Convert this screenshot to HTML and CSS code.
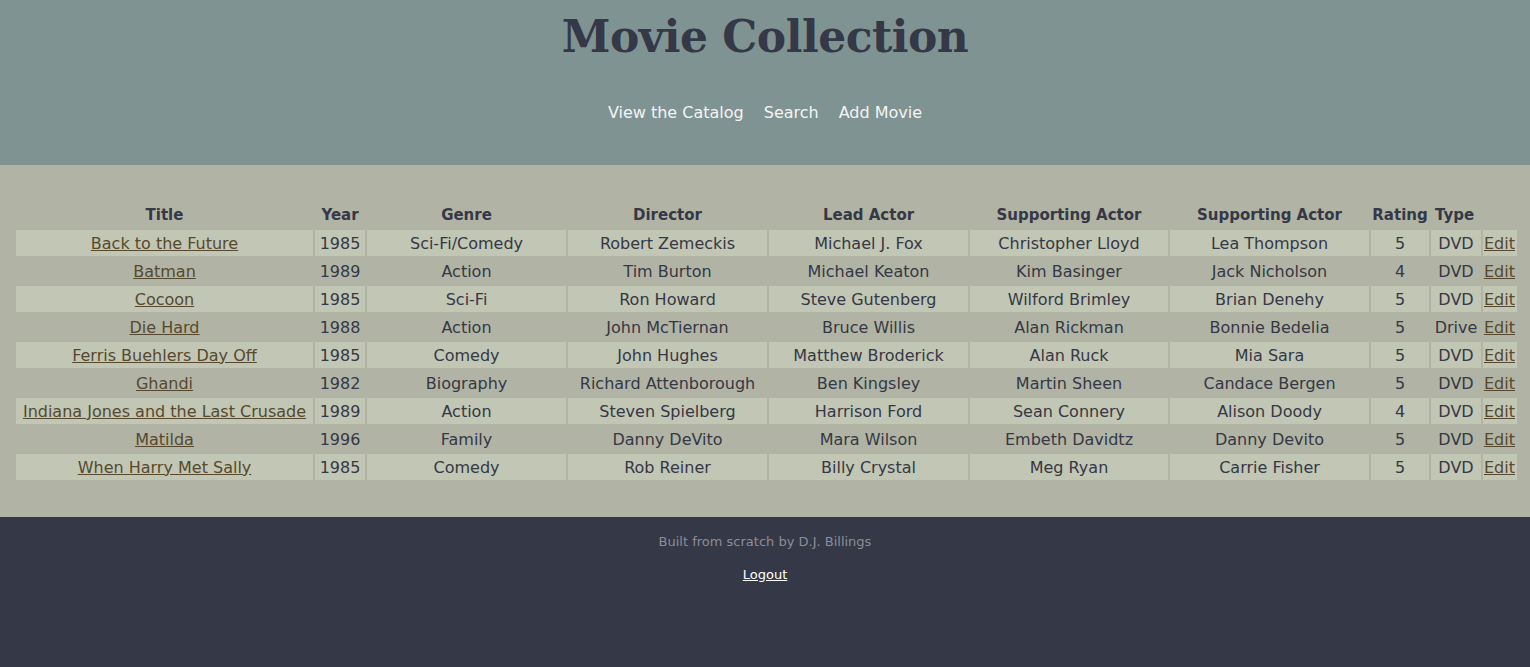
FILE: index.html
```html
<!DOCTYPE html>
<html>
<head>
<meta charset="utf-8">
<title>Movie Collection</title>
<link rel="stylesheet" href="styles.css">
</head>
<body>
<header class="site-header">
  <h1 class="site-title">Movie Collection</h1>
  <nav class="nav">
    <a href="#">View the Catalog</a>
    <a href="#">Search</a>
    <a href="#">Add Movie</a>
  </nav>
</header>
<main class="main">
  <table class="movies">
    <colgroup>
      <col class="c-title"><col class="c-year"><col class="c-genre"><col class="c-dir"><col class="c-lead"><col class="c-sup1"><col class="c-sup2"><col class="c-rating"><col class="c-type"><col class="c-edit">
    </colgroup>
    <thead>
      <tr><th>Title</th><th>Year</th><th>Genre</th><th>Director</th><th>Lead Actor</th><th>Supporting Actor</th><th>Supporting Actor</th><th>Rating</th><th class="left">Type</th><th></th></tr>
    </thead>
    <tbody>
      <tr><td><a href="#">Back to the Future</a></td><td>1985</td><td>Sci-Fi/Comedy</td><td>Robert Zemeckis</td><td>Michael J. Fox</td><td>Christopher Lloyd</td><td>Lea Thompson</td><td>5</td><td>DVD</td><td><a href="#">Edit</a></td></tr>
      <tr><td><a href="#">Batman</a></td><td>1989</td><td>Action</td><td>Tim Burton</td><td>Michael Keaton</td><td>Kim Basinger</td><td>Jack Nicholson</td><td>4</td><td>DVD</td><td><a href="#">Edit</a></td></tr>
      <tr><td><a href="#">Cocoon</a></td><td>1985</td><td>Sci-Fi</td><td>Ron Howard</td><td>Steve Gutenberg</td><td>Wilford Brimley</td><td>Brian Denehy</td><td>5</td><td>DVD</td><td><a href="#">Edit</a></td></tr>
      <tr><td><a href="#">Die Hard</a></td><td>1988</td><td>Action</td><td>John McTiernan</td><td>Bruce Willis</td><td>Alan Rickman</td><td>Bonnie Bedelia</td><td>5</td><td>Drive</td><td><a href="#">Edit</a></td></tr>
      <tr><td><a href="#">Ferris Buehlers Day Off</a></td><td>1985</td><td>Comedy</td><td>John Hughes</td><td>Matthew Broderick</td><td>Alan Ruck</td><td>Mia Sara</td><td>5</td><td>DVD</td><td><a href="#">Edit</a></td></tr>
      <tr><td><a href="#">Ghandi</a></td><td>1982</td><td>Biography</td><td>Richard Attenborough</td><td>Ben Kingsley</td><td>Martin Sheen</td><td>Candace Bergen</td><td>5</td><td>DVD</td><td><a href="#">Edit</a></td></tr>
      <tr><td><a href="#">Indiana Jones and the Last Crusade</a></td><td>1989</td><td>Action</td><td>Steven Spielberg</td><td>Harrison Ford</td><td>Sean Connery</td><td>Alison Doody</td><td>4</td><td>DVD</td><td><a href="#">Edit</a></td></tr>
      <tr><td><a href="#">Matilda</a></td><td>1996</td><td>Family</td><td>Danny DeVito</td><td>Mara Wilson</td><td>Embeth Davidtz</td><td>Danny Devito</td><td>5</td><td>DVD</td><td><a href="#">Edit</a></td></tr>
      <tr><td><a href="#">When Harry Met Sally</a></td><td>1985</td><td>Comedy</td><td>Rob Reiner</td><td>Billy Crystal</td><td>Meg Ryan</td><td>Carrie Fisher</td><td>5</td><td>DVD</td><td><a href="#">Edit</a></td></tr>
    </tbody>
  </table>
</main>
<footer class="site-footer">
  <p class="credit">Built from scratch by D.J. Billings</p>
  <a class="logout" href="#">Logout</a>
</footer>
</body>
</html>
```

FILE: styles.css
```css
html, body {
  margin: 0;
  padding: 0;
}
body {
  min-height: 100vh;
  display: flex;
  flex-direction: column;
  font-family: "DejaVu Sans", "Open Sans", sans-serif;
  color: #353846;
  background: #353846;
}
.site-header {
  background: #7f9392;
  height: 165px;
  box-sizing: border-box;
  padding-top: 10px;
  text-align: center;
}
.site-title {
  margin: 0;
  font-family: "DejaVu Serif", serif;
  font-weight: bold;
  font-size: 44px;
  line-height: 54px;
  color: #353846;
  letter-spacing: -0.5px;
}
.nav {
  margin-top: 39px;
  display: flex;
  justify-content: center;
  gap: 20px;
  font-size: 16px;
}
.nav a {
  color: #f4f4f4;
  text-decoration: none;
}
.main {
  background: #b1b4a4;
  padding: 34px 14px 35px 14px;
}
.movies {
  table-layout: fixed;
  width: 1505px;
  border-spacing: 2px;
  font-size: 16px;
}
.c-title { width: 297px; }
.c-year { width: 50px; }
.c-genre { width: 199px; }
.c-dir { width: 199px; }
.c-lead { width: 199px; }
.c-sup1 { width: 198px; }
.c-sup2 { width: 199px; }
.c-rating { width: 58px; }
.c-type { width: 50px; }
.c-edit { width: 34px; }
.movies th, .movies td {
  padding: 1px;
  height: 24px;
  text-align: center;
  white-space: nowrap;
  overflow: visible;
}
.movies th {
  font-weight: bold;
  font-size: 15px;
  padding-top: 2px;
}
.movies th.left {
  text-align: left;
  padding-left: 4px;
}
.movies td:last-child {
  text-align: left;
}
.movies tbody tr:nth-child(odd) td {
  background: #c2c6b4;
}
.movies a {
  color: #56492d;
}
.site-footer {
  flex: 1;
  background: #353846;
  text-align: center;
  padding-top: 17px;
  font-size: 13px;
}
.credit {
  margin: 0 0 18px 0;
  color: #8b8e96;
}
.logout {
  color: #ffffff;
}
```
